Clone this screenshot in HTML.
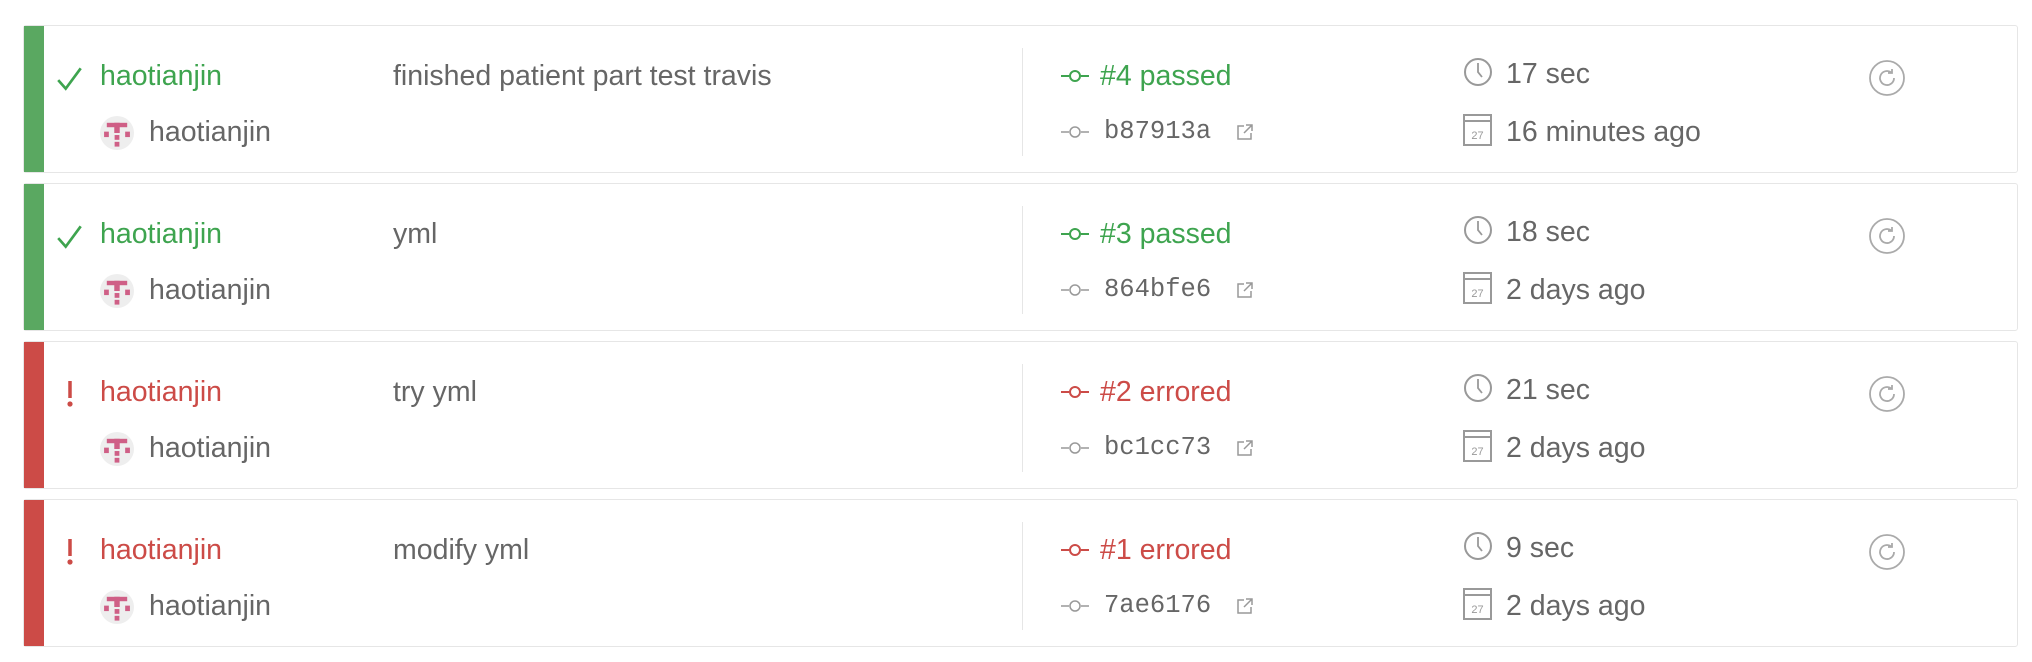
<!DOCTYPE html>
<html><head><meta charset="utf-8"><style>
body{margin:0;background:#fff;width:2032px;height:662px;position:relative;overflow:hidden;font-family:"Liberation Sans",sans-serif;}
.card{position:absolute;left:23px;width:1995px;height:148px;border:1px solid #e6e6e6;border-radius:3px;box-sizing:border-box;background:#fff}
.bar{position:absolute;left:0;top:0;bottom:0;width:20px}
.t{position:absolute;white-space:nowrap;font-size:28.5px;color:#666;line-height:32px}
.mono{font-family:"Liberation Mono",monospace;font-size:25.5px;letter-spacing:0}
.div{position:absolute;left:998px;top:22px;height:108px;border-left:1px solid #e6e6e6}
svg{position:absolute}
.g{color:#3ea44f}.r{color:#cc4b47}
</style></head><body>

<div class="card" style="top:25px">
<div class="bar" style="background:#5aa861"></div>
<svg style="left:31px;top:38px" width="30" height="30" viewBox="0 0 28 28"><path d="M3 15 L10 23 L24 4" fill="none" stroke="#3ea44f" stroke-width="2.5"/></svg>
<div class="t g" style="left:76px;top:34px">haotianjin</div>
<svg style="left:76px;top:90px" width="34" height="34" viewBox="0 0 10 10"><circle cx="5" cy="5" r="5" fill="#eee"/><rect x="2" y="2" width="6" height="1.3" fill="#cf5f86"/><rect x="4.2" y="2" width="1.6" height="3" fill="#cf5f86"/><rect x="1.2" y="4.6" width="1.4" height="1.6" fill="#cf5f86"/><rect x="7.4" y="4.6" width="1.4" height="1.6" fill="#cf5f86"/><rect x="4.3" y="5.6" width="1.4" height="1.4" fill="#cf5f86"/><rect x="4.3" y="7.6" width="1.4" height="1.4" fill="#cf5f86"/></svg>
<div class="t" style="left:125px;top:90px">haotianjin</div>
<div class="t" style="left:369px;top:34px">finished patient part test travis</div>
<div class="div"></div>
<svg style="left:1037px;top:40px" width="30" height="20" viewBox="0 0 30 20"><line x1="0" y1="10" x2="8" y2="10" stroke="#3ea44f" stroke-width="2"/><circle cx="14" cy="10" r="5" fill="none" stroke="#3ea44f" stroke-width="2"/><line x1="20" y1="10" x2="28" y2="10" stroke="#3ea44f" stroke-width="2"/></svg>
<div class="t g" style="left:1076px;top:34px">#4 passed</div>
<svg style="left:1037px;top:96px" width="30" height="20" viewBox="0 0 30 20"><line x1="0" y1="10" x2="8" y2="10" stroke="#999" stroke-width="1.5"/><circle cx="14" cy="10" r="5" fill="none" stroke="#999" stroke-width="1.5"/><line x1="20" y1="10" x2="28" y2="10" stroke="#999" stroke-width="1.5"/></svg>
<div class="t mono" style="left:1080px;top:90px">b87913a</div>
<svg style="left:1212px;top:97px" width="18" height="18" viewBox="0 0 18 18"><path d="M8 3H2v13h13v-6M10 2h6v6M16 2L8 10" fill="none" stroke="#999" stroke-width="1.5"/></svg>
<svg style="left:1439px;top:31px" width="30" height="30" viewBox="0 0 30 30"><circle cx="15" cy="15" r="13" fill="none" stroke="#999" stroke-width="2"/><path d="M15 6V15L19 20" fill="none" stroke="#999" stroke-width="1.8"/></svg>
<div class="t" style="left:1482px;top:32px">17 sec</div>
<svg style="left:1439px;top:88px" width="30" height="32" viewBox="0 0 30 32"><rect x="1" y="1" width="27" height="30" fill="none" stroke="#999" stroke-width="2"/><line x1="1" y1="7" x2="28" y2="7" stroke="#999" stroke-width="2"/><text x="14.5" y="25" font-size="11" text-anchor="middle" fill="#999" font-family="Liberation Sans">27</text></svg>
<div class="t" style="left:1482px;top:90px">16 minutes ago</div>
<svg style="left:1844px;top:33px" width="38" height="38" viewBox="0 0 38 38"><circle cx="19" cy="19" r="17" fill="none" stroke="#aaa" stroke-width="1.8"/><path d="M26 19a7 7 0 1 1-3-5.7M24 10v4h-4" fill="none" stroke="#aaa" stroke-width="1.8"/></svg>
</div>

<div class="card" style="top:183px">
<div class="bar" style="background:#5aa861"></div>
<svg style="left:31px;top:38px" width="30" height="30" viewBox="0 0 28 28"><path d="M3 15 L10 23 L24 4" fill="none" stroke="#3ea44f" stroke-width="2.5"/></svg>
<div class="t g" style="left:76px;top:34px">haotianjin</div>
<svg style="left:76px;top:90px" width="34" height="34" viewBox="0 0 10 10"><circle cx="5" cy="5" r="5" fill="#eee"/><rect x="2" y="2" width="6" height="1.3" fill="#cf5f86"/><rect x="4.2" y="2" width="1.6" height="3" fill="#cf5f86"/><rect x="1.2" y="4.6" width="1.4" height="1.6" fill="#cf5f86"/><rect x="7.4" y="4.6" width="1.4" height="1.6" fill="#cf5f86"/><rect x="4.3" y="5.6" width="1.4" height="1.4" fill="#cf5f86"/><rect x="4.3" y="7.6" width="1.4" height="1.4" fill="#cf5f86"/></svg>
<div class="t" style="left:125px;top:90px">haotianjin</div>
<div class="t" style="left:369px;top:34px">yml</div>
<div class="div"></div>
<svg style="left:1037px;top:40px" width="30" height="20" viewBox="0 0 30 20"><line x1="0" y1="10" x2="8" y2="10" stroke="#3ea44f" stroke-width="2"/><circle cx="14" cy="10" r="5" fill="none" stroke="#3ea44f" stroke-width="2"/><line x1="20" y1="10" x2="28" y2="10" stroke="#3ea44f" stroke-width="2"/></svg>
<div class="t g" style="left:1076px;top:34px">#3 passed</div>
<svg style="left:1037px;top:96px" width="30" height="20" viewBox="0 0 30 20"><line x1="0" y1="10" x2="8" y2="10" stroke="#999" stroke-width="1.5"/><circle cx="14" cy="10" r="5" fill="none" stroke="#999" stroke-width="1.5"/><line x1="20" y1="10" x2="28" y2="10" stroke="#999" stroke-width="1.5"/></svg>
<div class="t mono" style="left:1080px;top:90px">864bfe6</div>
<svg style="left:1212px;top:97px" width="18" height="18" viewBox="0 0 18 18"><path d="M8 3H2v13h13v-6M10 2h6v6M16 2L8 10" fill="none" stroke="#999" stroke-width="1.5"/></svg>
<svg style="left:1439px;top:31px" width="30" height="30" viewBox="0 0 30 30"><circle cx="15" cy="15" r="13" fill="none" stroke="#999" stroke-width="2"/><path d="M15 6V15L19 20" fill="none" stroke="#999" stroke-width="1.8"/></svg>
<div class="t" style="left:1482px;top:32px">18 sec</div>
<svg style="left:1439px;top:88px" width="30" height="32" viewBox="0 0 30 32"><rect x="1" y="1" width="27" height="30" fill="none" stroke="#999" stroke-width="2"/><line x1="1" y1="7" x2="28" y2="7" stroke="#999" stroke-width="2"/><text x="14.5" y="25" font-size="11" text-anchor="middle" fill="#999" font-family="Liberation Sans">27</text></svg>
<div class="t" style="left:1482px;top:90px">2 days ago</div>
<svg style="left:1844px;top:33px" width="38" height="38" viewBox="0 0 38 38"><circle cx="19" cy="19" r="17" fill="none" stroke="#aaa" stroke-width="1.8"/><path d="M26 19a7 7 0 1 1-3-5.7M24 10v4h-4" fill="none" stroke="#aaa" stroke-width="1.8"/></svg>
</div>

<div class="card" style="top:341px">
<div class="bar" style="background:#cc4b47"></div>
<svg style="left:40px;top:37px" width="12" height="30" viewBox="0 0 12 30"><path d="M6 2V19" stroke="#cc4b47" stroke-width="3.5"/><circle cx="6" cy="25" r="2.6" fill="#cc4b47"/></svg>
<div class="t r" style="left:76px;top:34px">haotianjin</div>
<svg style="left:76px;top:90px" width="34" height="34" viewBox="0 0 10 10"><circle cx="5" cy="5" r="5" fill="#eee"/><rect x="2" y="2" width="6" height="1.3" fill="#cf5f86"/><rect x="4.2" y="2" width="1.6" height="3" fill="#cf5f86"/><rect x="1.2" y="4.6" width="1.4" height="1.6" fill="#cf5f86"/><rect x="7.4" y="4.6" width="1.4" height="1.6" fill="#cf5f86"/><rect x="4.3" y="5.6" width="1.4" height="1.4" fill="#cf5f86"/><rect x="4.3" y="7.6" width="1.4" height="1.4" fill="#cf5f86"/></svg>
<div class="t" style="left:125px;top:90px">haotianjin</div>
<div class="t" style="left:369px;top:34px">try yml</div>
<div class="div"></div>
<svg style="left:1037px;top:40px" width="30" height="20" viewBox="0 0 30 20"><line x1="0" y1="10" x2="8" y2="10" stroke="#cc4b47" stroke-width="2"/><circle cx="14" cy="10" r="5" fill="none" stroke="#cc4b47" stroke-width="2"/><line x1="20" y1="10" x2="28" y2="10" stroke="#cc4b47" stroke-width="2"/></svg>
<div class="t r" style="left:1076px;top:34px">#2 errored</div>
<svg style="left:1037px;top:96px" width="30" height="20" viewBox="0 0 30 20"><line x1="0" y1="10" x2="8" y2="10" stroke="#999" stroke-width="1.5"/><circle cx="14" cy="10" r="5" fill="none" stroke="#999" stroke-width="1.5"/><line x1="20" y1="10" x2="28" y2="10" stroke="#999" stroke-width="1.5"/></svg>
<div class="t mono" style="left:1080px;top:90px">bc1cc73</div>
<svg style="left:1212px;top:97px" width="18" height="18" viewBox="0 0 18 18"><path d="M8 3H2v13h13v-6M10 2h6v6M16 2L8 10" fill="none" stroke="#999" stroke-width="1.5"/></svg>
<svg style="left:1439px;top:31px" width="30" height="30" viewBox="0 0 30 30"><circle cx="15" cy="15" r="13" fill="none" stroke="#999" stroke-width="2"/><path d="M15 6V15L19 20" fill="none" stroke="#999" stroke-width="1.8"/></svg>
<div class="t" style="left:1482px;top:32px">21 sec</div>
<svg style="left:1439px;top:88px" width="30" height="32" viewBox="0 0 30 32"><rect x="1" y="1" width="27" height="30" fill="none" stroke="#999" stroke-width="2"/><line x1="1" y1="7" x2="28" y2="7" stroke="#999" stroke-width="2"/><text x="14.5" y="25" font-size="11" text-anchor="middle" fill="#999" font-family="Liberation Sans">27</text></svg>
<div class="t" style="left:1482px;top:90px">2 days ago</div>
<svg style="left:1844px;top:33px" width="38" height="38" viewBox="0 0 38 38"><circle cx="19" cy="19" r="17" fill="none" stroke="#aaa" stroke-width="1.8"/><path d="M26 19a7 7 0 1 1-3-5.7M24 10v4h-4" fill="none" stroke="#aaa" stroke-width="1.8"/></svg>
</div>

<div class="card" style="top:499px">
<div class="bar" style="background:#cc4b47"></div>
<svg style="left:40px;top:37px" width="12" height="30" viewBox="0 0 12 30"><path d="M6 2V19" stroke="#cc4b47" stroke-width="3.5"/><circle cx="6" cy="25" r="2.6" fill="#cc4b47"/></svg>
<div class="t r" style="left:76px;top:34px">haotianjin</div>
<svg style="left:76px;top:90px" width="34" height="34" viewBox="0 0 10 10"><circle cx="5" cy="5" r="5" fill="#eee"/><rect x="2" y="2" width="6" height="1.3" fill="#cf5f86"/><rect x="4.2" y="2" width="1.6" height="3" fill="#cf5f86"/><rect x="1.2" y="4.6" width="1.4" height="1.6" fill="#cf5f86"/><rect x="7.4" y="4.6" width="1.4" height="1.6" fill="#cf5f86"/><rect x="4.3" y="5.6" width="1.4" height="1.4" fill="#cf5f86"/><rect x="4.3" y="7.6" width="1.4" height="1.4" fill="#cf5f86"/></svg>
<div class="t" style="left:125px;top:90px">haotianjin</div>
<div class="t" style="left:369px;top:34px">modify yml</div>
<div class="div"></div>
<svg style="left:1037px;top:40px" width="30" height="20" viewBox="0 0 30 20"><line x1="0" y1="10" x2="8" y2="10" stroke="#cc4b47" stroke-width="2"/><circle cx="14" cy="10" r="5" fill="none" stroke="#cc4b47" stroke-width="2"/><line x1="20" y1="10" x2="28" y2="10" stroke="#cc4b47" stroke-width="2"/></svg>
<div class="t r" style="left:1076px;top:34px">#1 errored</div>
<svg style="left:1037px;top:96px" width="30" height="20" viewBox="0 0 30 20"><line x1="0" y1="10" x2="8" y2="10" stroke="#999" stroke-width="1.5"/><circle cx="14" cy="10" r="5" fill="none" stroke="#999" stroke-width="1.5"/><line x1="20" y1="10" x2="28" y2="10" stroke="#999" stroke-width="1.5"/></svg>
<div class="t mono" style="left:1080px;top:90px">7ae6176</div>
<svg style="left:1212px;top:97px" width="18" height="18" viewBox="0 0 18 18"><path d="M8 3H2v13h13v-6M10 2h6v6M16 2L8 10" fill="none" stroke="#999" stroke-width="1.5"/></svg>
<svg style="left:1439px;top:31px" width="30" height="30" viewBox="0 0 30 30"><circle cx="15" cy="15" r="13" fill="none" stroke="#999" stroke-width="2"/><path d="M15 6V15L19 20" fill="none" stroke="#999" stroke-width="1.8"/></svg>
<div class="t" style="left:1482px;top:32px">9 sec</div>
<svg style="left:1439px;top:88px" width="30" height="32" viewBox="0 0 30 32"><rect x="1" y="1" width="27" height="30" fill="none" stroke="#999" stroke-width="2"/><line x1="1" y1="7" x2="28" y2="7" stroke="#999" stroke-width="2"/><text x="14.5" y="25" font-size="11" text-anchor="middle" fill="#999" font-family="Liberation Sans">27</text></svg>
<div class="t" style="left:1482px;top:90px">2 days ago</div>
<svg style="left:1844px;top:33px" width="38" height="38" viewBox="0 0 38 38"><circle cx="19" cy="19" r="17" fill="none" stroke="#aaa" stroke-width="1.8"/><path d="M26 19a7 7 0 1 1-3-5.7M24 10v4h-4" fill="none" stroke="#aaa" stroke-width="1.8"/></svg>
</div>

</body></html>
